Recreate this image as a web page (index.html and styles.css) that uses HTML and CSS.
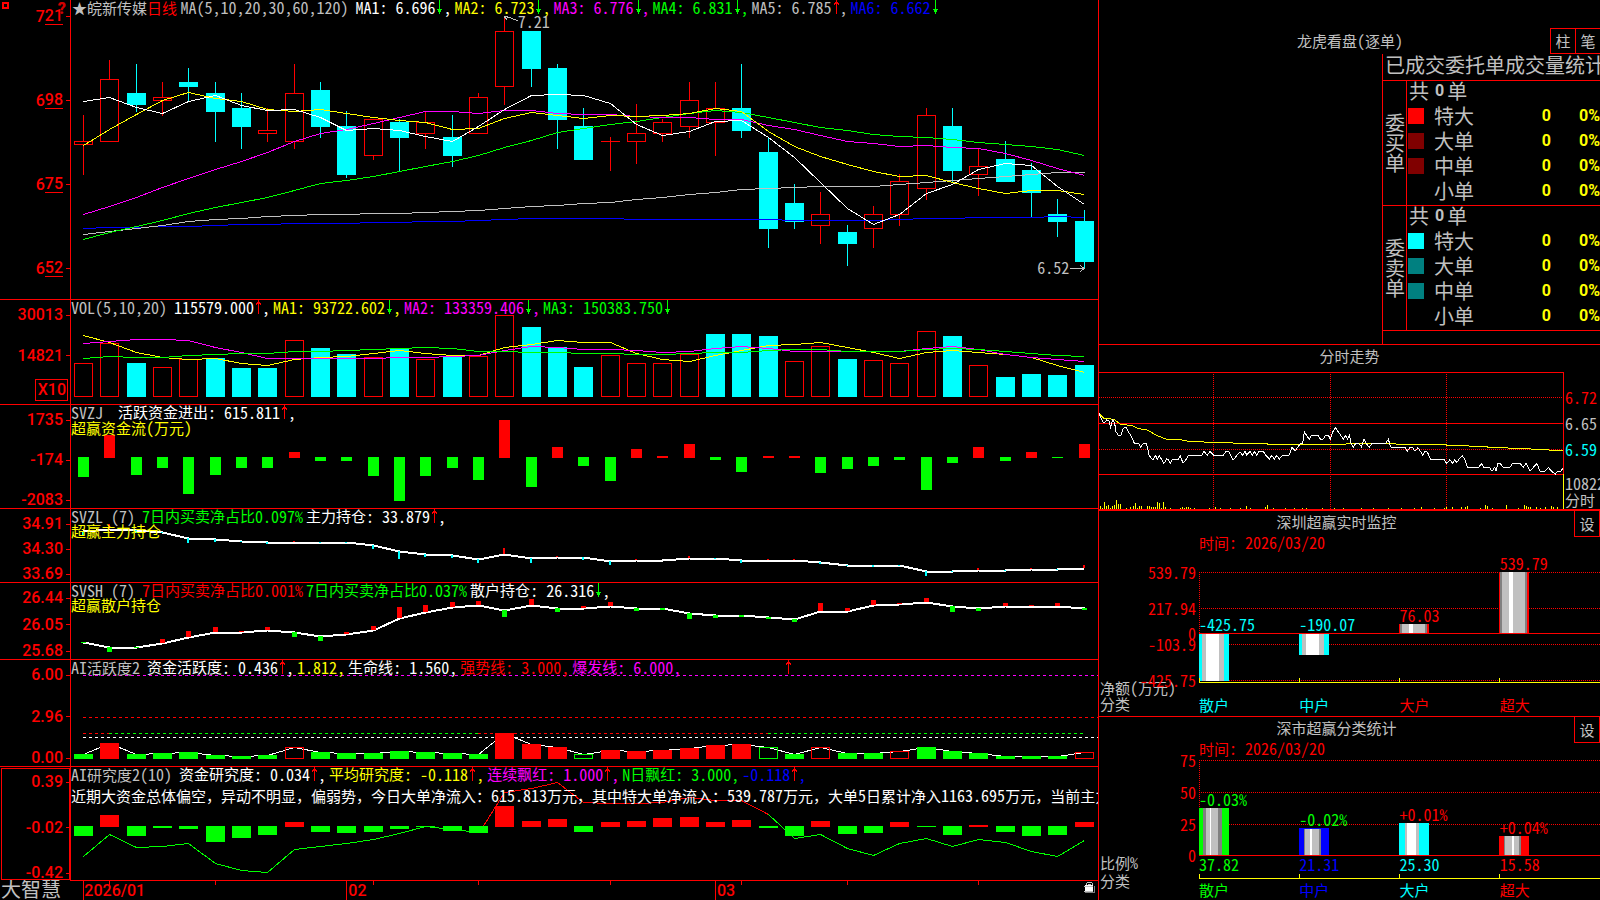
FILE: index.html
```html
<!DOCTYPE html>
<html lang="zh-CN">
<head>
<meta charset="utf-8">
<title>大智慧 皖新传媒</title>
<link rel="stylesheet" href="styles.css">
</head>
<body>
<svg class="defs" aria-hidden="true">
  <symbol id="up" viewBox="0 0 8 15"><path d="M4 0h1v15h-1zM3 2h3v1h1v2h-1v-1h-3v1h-1v-2h1z"/></symbol>
  <symbol id="down" viewBox="0 0 8 15"><path d="M4 0h1v15h-1zM2 10h5v1h-1v2h-1v1h-1v-1h-1v-2h-1z"/></symbol>
</svg>
<main class="terminal">
  <section class="charts">
    <article class="panel price">
      <div class="axis marked"><i class="mark"></i><b class="hint">?</b><span>7<u>21</u></span><span>6<u>98</u></span><span>6<u>75</u></span><span>6<u>52</u></span></div>
      <div class="plot">
        <svg id="price" viewBox="71 0 1027 299" preserveAspectRatio="none"></svg>
        <header class="legend">
          <span class="title"><span class="star">★</span>皖新传媒<em class="red">日线</em> <span class="n">MA(5,10,20,30,60,120)</span></span>
          <span class="item white"><span class="n">MA1: 6.696</span><svg class="down"><use href="#down"/></svg><span class="n">,</span></span>
          <span class="item yellow"><span class="n">MA2: 6.723</span><svg class="down"><use href="#down"/></svg><span class="n">,</span></span>
          <span class="item magenta"><span class="n">MA3: 6.776</span><svg class="down"><use href="#down"/></svg><span class="n">,</span></span>
          <span class="item green"><span class="n">MA4: 6.831</span><svg class="down"><use href="#down"/></svg><span class="n">,</span></span>
          <span class="item"><span class="n">MA5: 6.785</span><svg class="up"><use href="#up"/></svg><span class="n">,</span></span>
          <span class="item blue"><span class="n">MA6: 6.662</span><svg class="down"><use href="#down"/></svg></span>
        </header>
        <span class="n note high">7.21</span>
        <span class="n note low">6.52</span>
      </div>
    </article>
    <article class="panel volume">
      <div class="axis"><span>30013</span><span>14821</span><span class="unit">X10</span></div>
      <div class="plot">
        <svg id="volume" viewBox="71 300 1027 104" preserveAspectRatio="none"></svg>
        <header class="legend">
          <span class="title n">VOL(5,10,20)</span>
          <span class="item white"><span class="n">115579.000</span><svg class="up"><use href="#up"/></svg><span class="n">,</span></span>
          <span class="item yellow"><span class="n">MA1: 93722.602</span><svg class="down"><use href="#down"/></svg><span class="n">,</span></span>
          <span class="item magenta"><span class="n">MA2: 133359.406</span><svg class="down"><use href="#down"/></svg><span class="n">,</span></span>
          <span class="item green"><span class="n">MA3: 150383.750</span><svg class="down"><use href="#down"/></svg></span>
        </header>
      </div>
    </article>
    <article class="panel flow">
      <div class="axis"><span>1735</span><span>-174</span><span>-2083</span></div>
      <div class="plot">
        <svg id="flow" viewBox="71 405 1027 103" preserveAspectRatio="none"></svg>
        <header class="legend">
          <span class="title n">SVZJ </span>
          <span class="item white">活跃资金进出<span class="n">: 615.811</span><svg class="up"><use href="#up"/></svg><span class="n">,</span></span>
          <span class="sub yellow">超赢资金流<span class="n">(</span>万元<span class="n">)</span></span>
        </header>
      </div>
    </article>
    <article class="panel main-hold">
      <div class="axis"><span>34.91</span><span>34.30</span><span>33.69</span></div>
      <div class="plot">
        <svg id="mainHold" viewBox="71 509 1027 73" preserveAspectRatio="none"></svg>
        <header class="legend">
          <span class="title n">SVZL (7)</span>
          <span class="item green"><span class="n">7</span>日内买卖净占比<span class="n">0.097%</span></span>
          <span class="item white">主力持仓<span class="n">: 33.879</span><svg class="up"><use href="#up"/></svg><span class="n">,</span></span>
          <span class="sub yellow">超赢主力持仓</span>
        </header>
      </div>
    </article>
    <article class="panel retail-hold">
      <div class="axis"><span>26.44</span><span>26.05</span><span>25.68</span></div>
      <div class="plot">
        <svg id="retailHold" viewBox="71 583 1027 76" preserveAspectRatio="none"></svg>
        <header class="legend">
          <span class="title n">SVSH (7)</span>
          <span class="item red"><span class="n">7</span>日内买卖净占比<span class="n">0.001%</span></span>
          <span class="item green"><span class="n">7</span>日内买卖净占比<span class="n">0.037%</span></span>
          <span class="item white">散户持仓<span class="n">: 26.316</span><svg class="down"><use href="#down"/></svg><span class="n">,</span></span>
          <span class="sub yellow">超赢散户持仓</span>
        </header>
      </div>
    </article>
    <article class="panel active">
      <div class="axis"><span>6.00</span><span>2.96</span><span>0.00</span></div>
      <div class="plot">
        <svg id="active" viewBox="71 660 1027 106" preserveAspectRatio="none"></svg>
        <header class="legend">
          <span class="title"><span class="n">AI</span>活跃度<span class="n">2</span></span>
          <span class="item white">资金活跃度<span class="n">: 0.436</span><svg class="up"><use href="#up"/></svg><span class="n">,</span></span>
          <span class="item yellow"><span class="n">1.812,</span></span>
          <span class="item white">生命线<span class="n">: 1.560,</span></span>
          <span class="item red">强势线<span class="n">: 3.000,</span></span>
          <span class="item magenta">爆发线<span class="n">: 6.000,</span></span>
          <span class="item lone"><svg class="up"><use href="#up"/></svg></span>
        </header>
      </div>
    </article>
    <article class="panel study">
      <div class="axis"><span>0.39</span><span>-0.02</span><span>-0.42</span></div>
      <div class="plot">
        <svg id="study" viewBox="71 767 1027 113" preserveAspectRatio="none"></svg>
        <header class="legend">
          <span class="title"><span class="n">AI</span>研究度<span class="n">2(10)</span></span>
          <span class="item white">资金研究度<span class="n">: 0.034</span><svg class="up"><use href="#up"/></svg><span class="n">,</span></span>
          <span class="item yellow">平均研究度<span class="n">: -0.118</span><svg class="up"><use href="#up"/></svg><span class="n">,</span></span>
          <span class="item magenta">连续飘红<span class="n">: 1.000</span><svg class="up"><use href="#up"/></svg><span class="n">,</span></span>
          <span class="item green"><span class="n">N</span>日飘红<span class="n">: 3.000,</span></span>
          <span class="item blue"><span class="n">-0.118</span><svg class="up"><use href="#up"/></svg><span class="n">,</span></span>
          <span class="sub white">近期大资金总体偏空，异动不明显，偏弱势，今日大单净流入：<span class="n">615.813</span>万元，其中特大单净流入：<span class="n">539.787</span>万元，大单<span class="n">5</span>日累计净入<span class="n">1163.695</span>万元，当前主力</span>
        </header>
      </div>
    </article>
    <footer class="timeline">
      <span class="brand">大智慧</span>
      <div class="dates">
        <svg id="dates" viewBox="71 881 1027 19" preserveAspectRatio="none"></svg>
        <span class="d1">2026/01</span><span class="d2">02</span><span class="d3">03</span>
        <svg class="lock" viewBox="0 0 11 13" width="11" height="13"><path d="M3 1h5v1h-5zM2 2h1v3h-1zM8 2h1v3h-1zM4 3h3v1h-3z" fill="#c0c0c0"/><path d="M1 4h8v7h-8z" fill="#fff"/><path d="M1 11h9v-6h1v7h-10z" fill="#808080"/><path d="M0 5h9v1h-9zM0 10h9v1h-9z" fill="#c0c0c0"/></svg>
      </div>
    </footer>
  </section>

  <aside class="side">
    <section class="box orders">
      <header class="bar"><h2>龙虎看盘<span class="n">(</span>逐单<span class="n">)</span></h2><button>柱</button><button>笔</button></header>
      <div class="sheet">
        <h3>已成交委托单成交量统计</h3>
        <div class="side-block">
          <div class="vert">委买单</div>
          <table>
            <colgroup><col class="c-key"><col class="c-name"><col class="c-count"><col></colgroup>
            <tr><td colspan="4">共<b class="total">0</b>单</td></tr>
            <tr><td><i class="sw s-red"></i></td><th>特大</th><td>0</td><td>0%</td></tr>
            <tr><td><i class="sw s-maroon"></i></td><th>大单</th><td>0</td><td>0%</td></tr>
            <tr><td><i class="sw s-maroon"></i></td><th>中单</th><td>0</td><td>0%</td></tr>
            <tr><td></td><th>小单</th><td>0</td><td>0%</td></tr>
          </table>
        </div>
        <div class="side-block">
          <div class="vert">委卖单</div>
          <table>
            <colgroup><col class="c-key"><col class="c-name"><col class="c-count"><col></colgroup>
            <tr><td colspan="4">共<b class="total">0</b>单</td></tr>
            <tr><td><i class="sw s-cyan"></i></td><th>特大</th><td>0</td><td>0%</td></tr>
            <tr><td><i class="sw s-teal"></i></td><th>大单</th><td>0</td><td>0%</td></tr>
            <tr><td><i class="sw s-teal"></i></td><th>中单</th><td>0</td><td>0%</td></tr>
            <tr><td></td><th>小单</th><td>0</td><td>0%</td></tr>
          </table>
        </div>
      </div>
    </section>
    <section class="box intraday">
      <h2>分时走势</h2>
      <div class="tick">
        <svg id="tick" viewBox="27 96 1395 411" preserveAspectRatio="none"></svg>
        <div class="quotes n"><span class="red">6.72</span><span>6.65</span><span class="cyan">6.59</span><span class="gap">10822</span><span class="cn">分时</span></div>
      </div>
    </section>
    <section class="box bars monitor">
      <header class="bar"><h2>深圳超赢实时监控</h2><button>设</button></header>
      <p class="time red">时间<span class="n">: 2026/03/20</span></p>
      <div class="scale n" id="monitorScale"></div>
      <div class="corner">净额<span class="n">(</span>万元<span class="n">)</span><br>分类</div>
      <div class="graph"><svg id="monitor" viewBox="0 551 401 146" preserveAspectRatio="none"></svg><div id="monitorTags"></div></div>
      <div class="cats"><span class="cyan">散户</span><span class="cyan">中户</span><span class="red">大户</span><span class="red">超大</span></div>
    </section>
    <section class="box bars stats">
      <header class="bar"><h2>深市超赢分类统计</h2><button>设</button></header>
      <p class="time red">时间<span class="n">: 2026/03/20</span></p>
      <div class="scale n" id="statsScale"></div>
      <div class="corner">比例<span class="n">%</span><br>分类</div>
      <div class="graph"><svg id="stats" viewBox="0 757 401 124" preserveAspectRatio="none"></svg><div id="statsTags"></div></div>
      <div class="cats"><span class="green">散户</span><span class="blue">中户</span><span class="cyan">大户</span><span class="red">超大</span></div>
    </section>
  </aside>
</main>
<script src="charts.js"></script>
</body>
</html>
```

FILE: styles.css
```css
:root {
  --red: #ff0000;
  --cyan: #00ffff;
  --green: #00ff00;
  --blue: #0000ff;
  --yellow: #ffff00;
  --magenta: #ff00ff;
  --silver: #c0c0c0;
  --cn: "Noto Sans CJK SC", sans-serif;
  --num: "Noto Sans Mono CJK SC", "Liberation Mono", "Noto Sans CJK SC", monospace;
}
* { box-sizing: border-box; }
body { margin: 0; background: #000; color: var(--silver); font: 15px/15px var(--cn); overflow: hidden; }
h2, h3, p, table { margin: 0; font-weight: 400; font-size: inherit; }
em, i { font-style: normal; }
svg { display: block; shape-rendering: crispEdges; }
.defs { display: none; }
.n { font-family: var(--num); font-size: 16px; white-space: pre; }
.red { color: var(--red); }
.cyan { color: var(--cyan); }
.green { color: var(--green); }
.blue { color: var(--blue); }
.yellow { color: var(--yellow); }
.magenta { color: var(--magenta); }
.white { color: #fff; }

.terminal { display: grid; grid-template-columns: minmax(0, 1098fr) minmax(0, 502fr); height: 100vh; min-height: 700px; }
.charts { display: grid; grid-template-rows: 300fr 105fr 104fr 74fr 77fr 107fr 114fr 19fr; min-width: 0; }
.panel { display: grid; grid-template-columns: 71px minmax(0, 1fr); border-bottom: 1px solid var(--red); min-height: 0; }

.axis { display: flex; flex-direction: column; justify-content: space-between; align-items: flex-end; padding: 8px 0 0; border-right: 1px solid var(--red); color: var(--red); font: 500 16px/16px Roboto, sans-serif; position: relative; }
.axis span { display: flex; align-items: center; }
.axis span::after { content: ""; width: 4px; height: 1px; margin-left: 3px; background: var(--red); }
.axis u { text-decoration: none; border-bottom: 1px solid var(--red); }
.axis .unit { border: 1px solid var(--red); margin: -9px 2px 0 0; padding: 2px 1px 2px 2px; }
.axis .unit::after { display: none; }
.mark { position: absolute; left: 2px; top: 2px; width: 7px; height: 7px; border: 2px solid var(--red); }
.hint { position: absolute; z-index: 1; right: 4px; top: 1px; color: #d00000; font-size: 16px; font-weight: 900; }
.price .axis { padding-bottom: 22px; }
.volume .axis { padding-bottom: 3px; padding-top: 7px; }
.flow .axis { padding-top: 7px; padding-bottom: 0; }
.main-hold .axis, .retail-hold .axis { padding-top: 7px; }
.active .axis { padding-top: 7px; }
.study .axis { padding-top: 7px; }
.study .axis { outline: 1px solid var(--red); outline-offset: -2px; }
.study { border-bottom: 0; }
.study .plot { border-bottom: 1px solid var(--red); }

.plot { display: grid; min-width: 0; min-height: 0; position: relative; }
.plot > * { grid-area: 1 / 1; min-width: 0; }
.plot > svg { width: 100%; height: 100%; min-height: 0; }
.legend { display: flex; flex-wrap: wrap; align-content: flex-start; column-gap: 3px; white-space: pre; overflow-x: clip; line-height: 14px; row-gap: 1px; }
.legend .title { margin-right: 4px; }
.star { margin-left: 1px; }
.item { display: flex; }
.item svg { width: 8px; height: 14px; }
.up { fill: var(--red); }
.down { fill: var(--green); }
.lone { margin-left: 100px; }
.sub { flex: 0 0 100%; }
.study .sub { margin-top: 5px; }
.note { position: absolute; }
.high { left: 43.5%; top: 4.6%; }
.low { right: 2.8%; bottom: 8%; }

.timeline { display: grid; grid-template-columns: 71px minmax(0, 1fr); min-height: 0; }
.brand { font-size: 20px; line-height: 16px; padding-left: 1px; }
.dates { position: relative; color: var(--red); font: 500 16px/18px Roboto, sans-serif; }
.dates > * { position: absolute; top: 1px; }
.dates > svg:first-child { width: 100%; height: 100%; top: 0; }
.d1 { left: 1.3%; }
.d2 { left: 27%; }
.d3 { left: 62.9%; }
.dates .lock { right: 3px; top: 0; }

.side { display: grid; grid-template-rows: 345fr 166fr 206fr 183fr; border-left: 1px solid var(--red); min-width: 0; }
.box { border-bottom: 1px solid var(--red); min-height: 0; min-width: 0; }
.bar { display: flex; }
.bar h2 { flex: 1; text-align: center; line-height: 22px; }
button { width: 26px; height: 26px; padding: 0; background: #000; color: var(--silver); border: 1px solid var(--red); border-top: 0; font: 15px/22px var(--cn); }

.orders { display: flex; flex-direction: column; overflow-x: clip; }
.orders .bar { padding-top: 28px; margin-right: -1px; }
.orders .bar h2 { padding-left: 50px; line-height: 24px; }
.orders button { border-top: 1px solid var(--red); margin-left: -1px; }
.sheet { flex: 1; align-self: flex-end; width: 218px; border-left: 1px solid var(--red); font-size: 20px; }
.sheet h3 { line-height: 22px; height: 26px; padding-left: 2px; white-space: nowrap; }
.side-block { display: grid; grid-template-columns: 23px minmax(0, 1fr); border-top: 1px solid var(--red); }
.side-block:last-child { border-bottom: 1px solid var(--red); }
.vert { width: 22px; padding-left: 2px; line-height: 20px; align-self: center; font-size: 20px; word-break: break-all; }
table { border-collapse: separate; border-spacing: 0; table-layout: fixed; width: 100%; border-left: 1px solid var(--red); }
tr { height: 25px; }
tr:last-child { height: 24px; }
td, th { padding: 0; font-weight: 400; line-height: 20px; vertical-align: top; text-align: left; white-space: nowrap; }
.c-key { width: 27px; }
.c-name { width: 66px; }
.c-count { width: 51px; }
td[colspan] { padding-left: 2px; }
tr > td:nth-child(3), tr > td:nth-child(4) { color: var(--yellow); font: 700 16px/20px Roboto, sans-serif; text-align: right; }
.total { display: inline-block; height: 20px; vertical-align: top; font: 700 16px/20px Roboto, sans-serif; margin: 0 3px 0 6px; }
.sw { display: block; width: 16px; height: 16px; margin: 2px 0 0 1px; }
.s-red { background: var(--red); }
.s-maroon { background: #800000; }
.s-cyan { background: var(--cyan); }
.s-teal { background: #008080; }

.intraday { display: grid; grid-template-rows: 27px minmax(0, 1fr); border-bottom-width: 2px; }
.intraday h2 { text-align: center; line-height: 22px; }
.tick { display: grid; grid-template-columns: minmax(0, 1fr) 36px; min-height: 0; }
.tick > svg { width: 100%; height: 100%; }
.quotes { display: flex; flex-direction: column; padding: 17px 0 0 1px; line-height: 16px; gap: 10px; overflow-x: clip; }
.quotes .gap { margin-top: 8px; }
.cn { font: 15px/15px var(--cn); margin-top: -9px; }

.bars { display: grid; grid-template-columns: 100px minmax(0, 1fr); grid-template-rows: 24px 16px minmax(0, 1fr) 19px; }
.bars .bar { grid-column: 1 / 3; }
.time { grid-area: 2 / 2; line-height: 14px; }
.scale { grid-area: 3 / 1; position: relative; color: var(--red); }
.scale span { position: absolute; right: 3px; line-height: 16px; margin-top: -9px; }
.corner { grid-area: 3 / 1 / 5 / 2; align-self: end; line-height: 16px; padding: 0 0 4px 1px; }
.stats .corner { line-height: 18px; padding-bottom: 10px; }
.graph { grid-area: 3 / 2; position: relative; }
.graph svg { width: 100%; height: 100%; position: absolute; }
.graph span { position: absolute; line-height: 16px; margin-top: -9px; }
.cats { grid-area: 4 / 2; display: grid; grid-template-columns: repeat(4, 1fr); line-height: 15px; }
.stats .cats { line-height: 18px; }
.stats { border-bottom: 0; }
```

FILE: charts.js
```js
const R = '#ff0000', C = '#00ffff', G = '#00ff00', B = '#0000ff', Y = '#ffff00', M = '#ff00ff', W = '#ffffff', S = '#c0c0c0', D = '#808080';
const el = id => document.getElementById(id);
const cx = i => Math.round(83 + 26.33 * i);
const rect = (x, y, w, h, f) => `<rect x="${x}" y="${y}" width="${w}" height="${h}" fill="${f}"/>`;
const hollow = (x, y, w, h, c) => h < 2 ? rect(x, y, w, 1, c) : `<rect x="${x + 0.5}" y="${y + 0.5}" width="${w - 1}" height="${h - 1}" fill="none" stroke="${c}"/>`;
const poly = (pts, c, w = 1, extra = '') => `<polyline points="${pts.map(p => p.join(',')).join(' ')}" fill="none" stroke="${c}" stroke-width="${w}" vector-effect="non-scaling-stroke" ${extra}/>`;
const series = (ys, c, w) => poly(ys.map((y, i) => [cx(i) + 0.5, y + 0.5]), c, w);
const hline = (x1, x2, y, c, dash) => `<line x1="${x1}" x2="${x2}" y1="${y + 0.5}" y2="${y + 0.5}" stroke="${c}" ${dash ? `stroke-dasharray="${dash}"` : ''}/>`;
const vline = (x, y1, y2, c, dash) => `<line x1="${x + 0.5}" x2="${x + 0.5}" y1="${y1}" y2="${y2}" stroke="${c}" ${dash ? `stroke-dasharray="${dash}"` : ''}/>`;

/* rising, high, body top, body bottom, low */
const candles = [
  [1,115,141,144,175],[1,60,79,141,141],[0,64,93,105,112],[1,82,97,100,116],[0,68,82,87,101],[0,82,93,112,142],[0,93,108,127,149],
  [1,108,130,133,142],[1,64,93,141,149],[0,82,90,127,138],[0,111,126,175,178],[1,119,119,155,160],[0,119,122,138,171],[1,111,122,133,149],
  [0,115,137,156,167],[1,93,97,133,133],[1,17,31,86,105],[0,31,31,69,87],[0,64,68,120,149],[0,108,126,160,160],[1,137,141,141,171],
  [1,104,133,141,164],[1,119,122,133,142],[1,82,100,126,138],[1,82,108,122,156],[0,64,108,131,138],[0,137,152,229,248],[0,184,203,222,229],
  [1,192,214,225,244],[0,225,232,244,266],[1,206,214,228,248],[1,174,181,214,226],[1,108,115,188,200],[0,108,126,171,182],[1,148,166,174,196],
  [0,141,159,182,182],[0,163,170,193,217],[0,199,214,222,237],[0,210,221,262,269]
];
let out = '';
candles.forEach(([up, hi, top, bot, lo], i) => {
  const x = cx(i), c = up ? R : C;
  out += rect(x, hi, 1, Math.max(top - hi, 0), c) + rect(x, bot, 1, Math.max(lo - bot, 0), c);
  out += up ? hollow(x - 9, top, 19, bot - top + 1, c) : rect(x - 9, top, 19, bot - top, c);
});
out += series([228,227,227,226,226,225,224,224,223,223,223,222,222,221,221,220,219,218,218,218,218,219,219,219,219,219,219,220,220,220,220,219,218,218,217,217,217,216,217], B);
out += series([234,231,228,225,221,219,218,216,215,214,214,213,213,212,211,210,208,206,205,203,202,199,197,194,192,189,188,187,186,186,186,184,182,180,178,176,174,172,172], S);
out += series([239,232,226,220,213,207,202,197,190,183,180,176,171,166,161,155,147,140,132,128,124,121,117,113,110,112,117,122,127,130,134,136,137,139,142,144,146,149,155], G);
out += series([214,206,197,187,178,169,161,152,141,133,129,123,117,111,111,113,110,110,113,114,114,116,117,117,119,119,125,129,135,141,143,146,145,147,148,153,160,168,175], M);
out += series([145,129,114,100,92,98,101,109,111,109,113,117,120,122,129,128,118,112,115,118,115,116,115,113,108,111,131,146,156,164,171,176,175,182,188,193,190,190,194], Y);
out += series([101,97,107,113,101,95,105,110,109,117,130,128,130,136,141,126,109,95,94,95,103,124,135,131,121,120,137,157,182,208,224,214,193,184,169,163,165,186,204], W);
out += poly([[504,16],[511,18],[518,21]], S) + poly([[504,16],[507,20]], S) + poly([[1070,268.5],[1084,268.5]], S) + poly([[1080,265],[1084,268.5],[1080,272]], S);
el('price').innerHTML = out;

const vol = [363,343,363,367,359,358,368,368,340,348,354,357,348,359,356,356,315,327,347,367,355,363,363,354,334,334,336,361,346,359,360,363,331,336,365,377,374,375,365];
const volUp = '110110001001010110001111000110111010000';
out = vol.map((y, i) => volUp[i] === '1' ? hollow(cx(i) - 9, y, 19, 397 - y, R) : rect(cx(i) - 9, y, 19, 397 - y, C)).join('');
out += series([335,342,352,357,359,358,363,365,359,357,356,353,350,353,355,355,347,344,340,342,342,353,359,361,355,350,345,344,342,347,352,358,352,350,352,354,357,365,372], Y);
out += series([343,341,339,339,340,347,352,358,358,358,358,358,357,357,356,355,350,346,347,349,349,350,352,351,348,346,348,351,351,351,351,351,348,346,349,354,357,359,361], M);
out += series([358,356,357,357,355,354,353,353,351,351,350,349,348,347,348,351,351,352,352,353,353,354,354,353,352,352,350,349,349,351,351,351,349,348,349,351,353,355,356], G);
el('volume').innerHTML = out;

const twoWay = (ys, zero, half, w) => ys.map((y, i) => y < zero ? rect(cx(i) - half, y, w, zero + 1 - y, R) : rect(cx(i) - half, zero, w, y - zero, G)).join('');
el('flow').innerHTML = twoWay([477,435,475,468,494,475,468,468,452,461,461,476,501,476,468,480,420,487,447,466,481,449,456,444,460,472,456,456,473,469,466,460,490,463,447,461,452,458,444], 457, 5, 11);

const trend = (ys, moves, w, down) => series(ys, W, 2) + ys.map((y, i) => moves[i] < 0 ? rect(cx(i) - (w >> 1), y + moves[i], w, -moves[i], R) : rect(cx(i) - (w >> 1), y, w, moves[i], down)).join('');
el('mainHold').innerHTML = trend(
  [531,529,530,532,538,539,541,542,542,542,542,545,551,554,555,559,554,558,557,557,561,560,560,558,558,560,560,560,562,565,565,565,571,571,570,570,569,569,568],
  [4,-5,3,1,5,3,1,2,-1,1,1,4,8,3,3,4,-6,5,-1,3,4,-1,0,-2,1,3,-1,-1,2,1,2,1,5,1,-2,1,-1,1,-3], 2, C);
el('retailHold').innerHTML = trend(
  [642,647,647,643,637,632,632,630,632,636,634,630,618,612,607,605,610,605,608,608,606,608,608,613,615,615,617,619,611,611,605,604,602,606,608,606,606,606,608],
  [1,5,1,-4,-6,-5,-1,-3,5,5,-2,-4,-11,-7,-5,-4,7,-6,4,-2,-4,3,2,6,3,2,2,3,-8,-3,-5,-1,-4,6,3,-3,-1,-3,2], 5, G);

const act = [754,743,754,753,752,755,756,755,747,752,753,753,751,752,753,754,733,744,747,754,750,751,750,748,745,744,747,754,747,753,753,751,747,751,753,756,756,756,752];
const kind = 'GRGGGGGGrGGGGGGGRRRgRRRRRRgGrGGrGGGGGGr';
out = hline(83, 1098, 675, M, '3 3') + hline(83, 1098, 717, R, '3 3') + hline(83, 1098, 737, W, '3 3');
out += hline(cx(0), cx(1), 733, R, '3 3') + hline(cx(1), cx(15), 733, G, '3 3') + hline(cx(15), cx(26), 733, R, '3 3') + hline(cx(26), cx(38), 733, G, '3 3');
out += series(act, W);
out += act.map((y, i) => {
  const k = kind[i], c = k.toUpperCase() === 'R' ? R : G;
  return (k === 'r' || k === 'g' ? hollow : rect)(cx(i) - 9, y, 19, 759 - y, c);
}).join('');
el('active').innerHTML = out;

const st = [856,834,847,846,843,863,870,872,849,846,843,839,833,826,829,832,792,788,782,802,803,803,802,797,800,800,814,838,834,848,855,843,838,846,839,842,851,856,840];
out = twoWay([836,815,836,828,829,842,838,835,822,832,833,832,829,827,831,833,806,821,819,832,822,821,818,817,822,820,828,836,821,834,833,822,827,835,825,832,836,835,822], 826, 9, 19);
const seg = (a, b) => st.slice(a, b).map((y, k) => [cx(a + k) + 0.5, y + 0.5]);
out += poly(seg(0, 16), G) + poly([[483.5, 826], ...seg(16, 27)], R) + poly(seg(26, 39), G);
el('study').innerHTML = out;

out = '';
[1, 5, 11, 15, 20, 25, 29, 34].forEach(i => out += vline(cx(i), 881, 885, R));
[0, 10, 24].forEach(i => out += vline(cx(i), 881, 900, R));
el('dates').innerHTML = out;

/* intraday chart */
const pairs = s => s.trim().split(' ').map(p => p.split(','));
const thin = (x1, y1, x2, y2, c, dash) => poly([[x1, y1], [x2, y2]], c, 1, dash ? `stroke-dasharray="${dash}"` : '');
out = thin(27, 97.5, 1420.5, 97.5, R) + thin(1420.5, 97, 1420.5, 403, R) + thin(27, 250.5, 1422, 250.5, R) + thin(27, 403.5, 1422, 403.5, R);
out += thin(27, 172.5, 1420, 172.5, R, '1 1') + thin(27, 328.5, 1420, 328.5, R, '1 1');
[370.5, 721.5, 1069.5].forEach(x => out += thin(x, 97, x, 507, R, '1 1'));
out += thin(1420.5, 403, 1420.5, 507, Y);
out += poly(pairs('27,220 42,235 72,238 90,252 130,258 145,266 172,270 200,286 230,298 270,299 290,303 335,304 345,307 425,307 430,310 530,311 535,313 765,313 770,311 915,311 920,313 1065,313 1072,316 1135,317 1140,319 1190,320 1195,322 1252,323 1256,325 1320,326 1325,328 1375,329 1380,332 1419,333'), Y);
out += poly(pairs('27,220 33,235 42,250 50,240 57,243 62,262 68,240 74,250 78,275 85,286 93,285 100,265 108,262 115,276 122,285 127,295 133,310 147,311 152,321 160,310 170,312 177,345 185,357 190,358 196,346 202,357 208,347 222,370 230,357 236,360 241,370 248,357 265,357 271,347 279,370 286,362 295,346 335,346 341,334 347,340 352,346 360,334 371,346 400,346 408,334 417,336 428,358 434,356 440,346 450,336 458,346 465,334 470,345 480,334 487,346 494,334 500,346 507,335 520,334 528,346 538,357 545,346 553,357 560,346 568,357 577,346 598,345 606,322 616,332 630,312 638,310 643,275 650,287 658,298 664,286 685,287 691,297 699,298 706,287 715,286 721,297 728,276 736,263 744,274 752,286 760,298 767,286 773,297 778,286 784,312 790,322 797,310 806,311 814,320 822,298 830,312 838,322 846,310 886,311 895,298 902,321 945,322 952,334 960,322 968,322 975,334 984,323 992,335 998,346 1004,334 1012,336 1022,358 1062,358 1070,370 1080,359 1088,370 1094,358 1100,368 1107,358 1117,347 1125,359 1132,382 1166,382 1174,371 1182,382 1198,382 1206,394 1214,382 1218,394 1224,370 1232,372 1240,382 1260,382 1268,370 1290,370 1300,382 1308,370 1320,394 1330,382 1341,371 1350,394 1365,394 1375,382 1385,394 1396,403 1402,394 1412,394 1419,384'), W);
pairs('31,498 37,504 43,486 49,498 55,495 61,504 67,498 73,495 79,480 85,492 91,492 109,504 121,501 130,498 136,489 142,504 148,498 154,498 172,498 178,498 184,501 190,501 196,501 202,486 208,489 214,504 220,486 226,501 241,504 271,504 277,501 283,504 289,501 295,501 301,504 313,504 358,504 376,501 391,504 421,504 451,504 469,498 481,504 526,501 532,495 550,504 586,504 613,504 637,504 649,504 697,504 732,504 760,504 815,504 850,504 895,504 934,504 974,504 994,501 1034,504 1064,504 1070,501 1088,501 1115,501 1125,501 1132,498 1172,504 1186,495 1192,498 1206,504 1249,495 1285,504 1303,495 1309,498 1315,501 1322,501 1340,501 1352,504 1366,501 1384,498 1390,501 1402,501')
  .forEach(([x, y]) => out += rect(x - 1, y, 3, 507 - y, Y));
el('tick').innerHTML = out;

/* category bar charts: stripes are [width, colour] from left to right */
const bar = (x, y, h, stripes) => stripes.map(([w, c]) => { const r = rect(x, y, w, h, c); x += w; return r; }).join('');
const labels = (id, list, top, height) => el(id).innerHTML = list.map(([text, y, x, cls]) =>
  `<span class="n ${cls || ''}" style="top:${((y - top) / height * 100).toFixed(2)}%${x === undefined ? '' : `;left:${x}%`}">${text}</span>`).join('');
const cool = [[3,C],[4,S],[13,W],[5,S],[5,C]], hot = [[1,R],[2,D],[7,S],[4,W],[12,S],[2,D],[2,R]];

out = [572, 608, 644, 680].map(y => hline(0, 401, y, R, '1 1')).join('') + hline(0, 401, 682, Y);
out += vline(0, 572, 680, R, '1 1');
out += bar(0, 634, 47, cool) + bar(100, 634, 21, cool) + bar(200, 624, 9, hot) + bar(300, 572, 61, hot) + hline(0, 401, 633, R);
[0, 100, 200, 300].forEach(x => out += vline(x, 678, 682, Y));
el('monitor').innerHTML = out;
labels('monitorScale', [['539.79', 573], ['217.94', 609], ['0', 634], ['-103.9', 645], ['-425.75', 681]], 551, 146);
labels('monitorTags', [['-425.75', 625, 0, 'cyan'], ['-190.07', 625, 25, 'cyan'], ['76.03', 616, 50, 'red'], ['539.79', 564, 75, 'red']], 551, 146);

out = [760, 792, 824].map(y => hline(0, 401, y, R, '1 1')).join('') + hline(0, 401, 878, Y);
out += vline(0, 760, 855, R, '1 1');
out += bar(0, 808, 47, [[4,G],[3,D],[4,S],[1,W],[7,S],[4,D],[7,G]]);
out += bar(100, 828, 27, [[5,B],[1,D],[5,S],[2,W],[7,S],[2,D],[8,B]]) + rect(100, 828, 30, 1, B);
out += bar(200, 823, 32, [[6,C],[2,S],[9,W],[3,S],[10,C]]);
out += bar(300, 836, 19, [[5,R],[1,D],[7,S],[2,W],[5,S],[2,D],[8,R]]) + hline(0, 401, 855, R);
[0, 100, 200, 300].forEach(x => out += vline(x, 874, 878, Y));
el('stats').innerHTML = out;
labels('statsScale', [['75', 761], ['50', 793], ['25', 825], ['0', 856]], 757, 124);
labels('statsTags', [['-0.03%', 800, 0, 'green'], ['-0.02%', 820, 25, 'green'], ['+0.01%', 815, 50, 'red'], ['+0.04%', 828, 75, 'red'],
  ['37.82', 865, 0, 'green'], ['21.31', 865, 25, 'blue'], ['25.30', 865, 50, 'cyan'], ['15.58', 865, 75, 'red']], 757, 124);
```
